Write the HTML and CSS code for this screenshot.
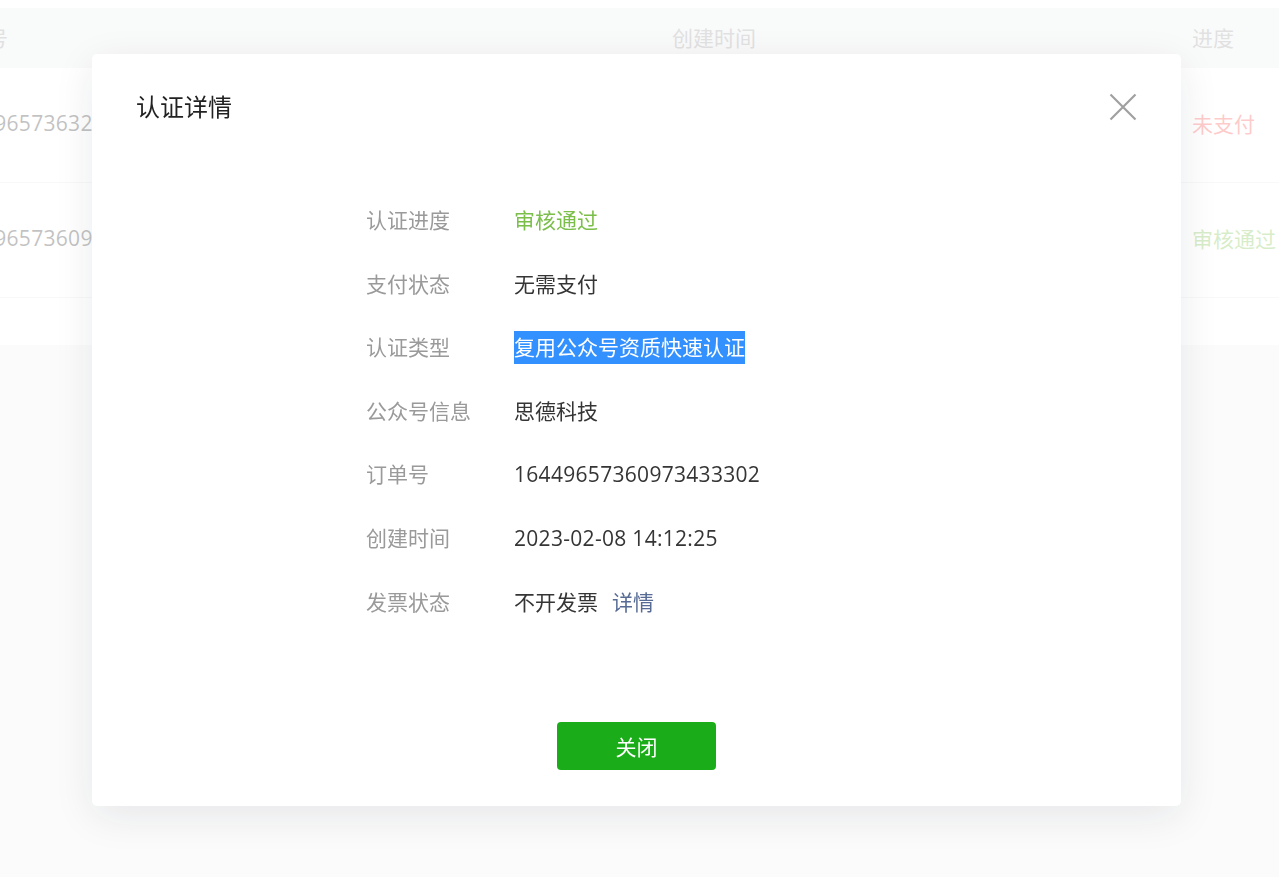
FILE: index.html
```html
<!DOCTYPE html>
<html lang="zh-CN">
<head>
  <meta charset="UTF-8">
  <meta name="viewport" content="width=device-width, initial-scale=1.0">
  <title>认证详情</title>
  <link rel="stylesheet" href="styles.css">
</head>
<body>
  <div class="list-wrap">
    <table class="order-table">
      <thead>
        <tr>
          <th class="col-order">订单号</th>
          <th class="col-time">创建时间</th>
          <th class="col-status">进度</th>
        </tr>
      </thead>
      <tbody>
        <tr>
          <td class="num">16449657363261930215</td>
          <td class="num">2023-02-08 14:15:02</td>
          <td class="status-unpaid">未支付</td>
        </tr>
        <tr>
          <td class="num">16449657360973433302</td>
          <td class="num">2023-02-08 14:12:25</td>
          <td class="status-pass">审核通过</td>
        </tr>
        <tr class="empty-row">
          <td colspan="3"></td>
        </tr>
      </tbody>
    </table>
  </div>

  <div class="mask">
    <div class="dialog">
      <div class="dialog-hd">
        <h3 class="dialog-title">认证详情</h3>
        <a href="#" class="dialog-close" title="关闭">
          <svg width="28" height="28" viewBox="0 0 28 28">
            <path d="M1.5 1.5 L26.5 26.5 M26.5 1.5 L1.5 26.5" stroke="#a0a0a0" stroke-width="2.2" fill="none"/>
          </svg>
        </a>
      </div>
      <div class="dialog-bd">
        <div class="info-row">
          <span class="info-label">认证进度</span>
          <span class="info-value text-pass">审核通过</span>
        </div>
        <div class="info-row">
          <span class="info-label">支付状态</span>
          <span class="info-value">无需支付</span>
        </div>
        <div class="info-row">
          <span class="info-label">认证类型</span>
          <span class="info-value"><span class="selected">复用公众号资质快速认证</span></span>
        </div>
        <div class="info-row">
          <span class="info-label">公众号信息</span>
          <span class="info-value">思德科技</span>
        </div>
        <div class="info-row">
          <span class="info-label">订单号</span>
          <span class="info-value num">16449657360973433302</span>
        </div>
        <div class="info-row">
          <span class="info-label">创建时间</span>
          <span class="info-value num">2023-02-08 14:12:25</span>
        </div>
        <div class="info-row">
          <span class="info-label">发票状态</span>
          <span class="info-value">不开发票<a href="#" class="link">详情</a></span>
        </div>
      </div>
      <div class="dialog-ft">
        <button type="button" class="btn-primary">关闭</button>
      </div>
    </div>
  </div>
</body>
</html>
```

FILE: styles.css
```css
body {
  margin: 0;
  background-color: #f0f0f0;
  font-family: "Open Sans", "Noto Sans CJK SC", sans-serif;
  font-size: 21px;
  color: #353535;
}
.num {
  letter-spacing: 0.3px;
}
.list-wrap {
  background-color: #ffffff;
  padding-top: 8px;
  overflow: hidden;
  box-shadow: 0 1px 2px rgba(0, 0, 0, 0.05);
}
.order-table {
  margin-left: -75px;
  width: 1447px;
  border-collapse: collapse;
  table-layout: fixed;
}
.order-table th {
  height: 58px;
  padding: 0 0 2px 20px;
  text-align: left;
  font-weight: normal;
  color: #999999;
  background-color: #eceeef;
}
.order-table .col-order {
  width: 707px;
}
.order-table .col-time {
  width: 500px;
}
.order-table td {
  height: 110px;
  padding: 0 0 4px 20px;
  border-bottom: 1px solid #e6e6e6;
  white-space: nowrap;
}
.order-table .empty-row td {
  height: 47px;
  padding: 0;
  border-bottom: none;
}
.status-unpaid {
  color: #fa5151;
}
.status-pass {
  color: #7bbf4a;
}
.mask {
  position: fixed;
  top: 0;
  left: 0;
  right: 0;
  bottom: 0;
  background-color: rgba(255, 255, 255, 0.7);
  padding: 54px 0 0 92px;
}
.dialog {
  width: 1089px;
  box-sizing: border-box;
  background-color: #ffffff;
  border-radius: 5px;
  padding: 35px 45px 36px;
  box-shadow: 0 10px 40px rgba(20, 30, 60, 0.09);
}
.dialog-hd {
  display: flex;
  justify-content: space-between;
  align-items: center;
}
.dialog-title {
  margin: 0 0 0 -1px;
  font-size: 24px;
  font-weight: normal;
  line-height: 36px;
  color: #222222;
}
.dialog-close {
  display: flex;
  margin-right: -1px;
}
.dialog-bd {
  margin-top: 79px;
  padding-left: 229px;
}
.info-row {
  display: flex;
  line-height: 33.6px;
  margin-bottom: 30px;
}
.info-row:last-child {
  margin-bottom: 0;
}
.info-label {
  width: 148px;
  flex-shrink: 0;
  color: #9a9a9a;
}
.text-pass {
  color: #7bbf4a;
}
.selected {
  display: inline-block;
  line-height: 33px;
  background-color: #3390ff;
  color: #ffffff;
}
.link {
  margin-left: 14px;
  color: #576b95;
  text-decoration: none;
}
.dialog-ft {
  margin-top: 103px;
  text-align: center;
}
.btn-primary {
  width: 159px;
  height: 48px;
  border: none;
  border-radius: 4px;
  background-color: #1aad19;
  color: #ffffff;
  font-family: "Open Sans", "Noto Sans CJK SC", sans-serif;
  font-size: 21px;
  cursor: pointer;
}
```
